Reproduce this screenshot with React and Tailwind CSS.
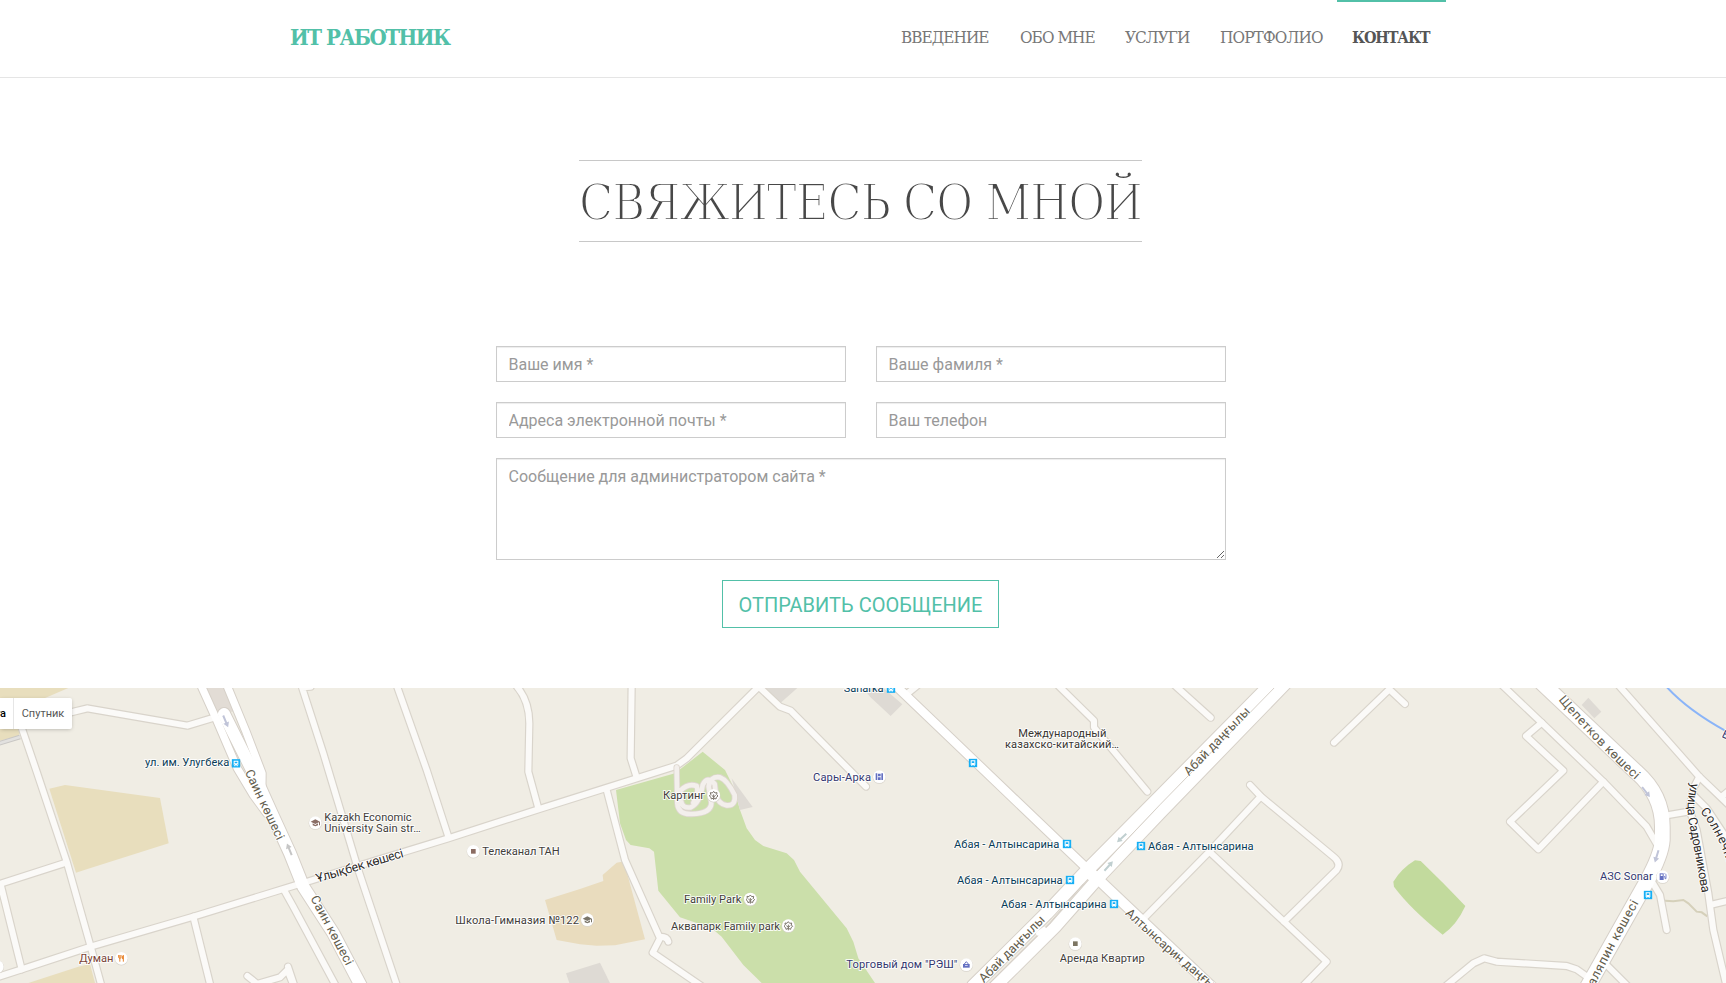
import React from 'react';

// Horizontal origins of the map tiles, in map units (3 units = 1px)
const A = 0, B = 870, C = 1740, D = 2610, E = 3480, F = 4290;

const areas = [
  [A, '#e8debd', 'M0,24 205,24 130,56 0,56Z'],
  [A, '#e8debd', 'M0,140 68,140 55,168 0,182Z'],
  [A, '#e8debd', 'M148,326 195,315 480,354 506,490 260,568 228,578Z'],
  [A, '#e8debd', 'M85,909 235,860 270,852 285,909Z'],
  [A, '#e2dcd5', 'M618,24 685,24 700,95 650,95Z'],
  [C, '#e9dcbe', 'M-105,660 -70,780 0,793 50,797 105,796 195,778 140,575 125,545 110,548 68,585 70,603 0,627Z'],
  [C, '#dedad4', 'M-42,880 60,848 90,909 -32,909Z'],
  [C, '#cbdfaa', 'M108,330 285,280 368,215 435,270 460,320 480,390 500,445 525,480 550,498 620,520 642,540 660,575 800,745 820,785 835,835 885,909 545,909 490,855 425,770 395,745 300,712 235,632 222,515 208,505 152,495 138,480 120,430Z'],
  [C, '#dedad4', 'M455,295 518,381 480,390Z'],
  [C, '#dedad4', 'M548,24 652,24 602,68Z'],
  [D, '#dedad4', 'M-20,24 40,24 97,73 62,108 0,50Z'],
  [E, '#c2da9d', 'M765,541 L782,543 L850,610 L916,678 Q890,735 848,764 Q750,685 702,620 L700,605 Q725,565 765,541Z'],
  [F, '#dedad4', 'M475,53 514,95 493,115 455,75Z'],
];

const local = [
  [A, 'M190,105 L217,96 L262,85 L562,137 L645,112'],
  [A, 'M64,140 L110,275 L200,545 L272,800 L305,920'],
  [A, 'M-10,615 L198,548'],
  [A, 'M3,618 L65,868'],
  [A, 'M-10,892 L65,868 L272,800 L580,710 L905,610'],
  [A, 'M580,710 L632,920'],
  [A, 'M852,630 L880,680 L1010,922'],
  [A, 'M742,888 L772,912 L840,892 L862,870 L882,920'],
  [B, 'M-6,860 L14,920'],
  [B, 'M20,615 L210,556 L475,475 L745,388 L945,325 L1160,257 L1190,235 L1402,24'],
  [B, 'M62,20 L36,22 L100,220 L205,570 L322,920'],
  [B, 'M318,10 L410,270 L475,470'],
  [B, 'M676,14 Q718,60 718,130 L715,275 L745,385'],
  [C, 'M155,14 L152,235 L170,292'],
  [C, 'M80,330 L135,540 L240,775 L218,818 L370,922'],
  [C, 'M240,770 Q262,770 265,785'],
  [C, 'M530,14 L600,80 L632,92 L858,320'],
  [D, 'M108,44 L145,14'],
  [D, 'M562,14 L672,122 L672,142 L832,335'],
  [D, 'M815,722 L1018,515 L1172,350'],
  [E, 'M42,14 L152,113'],
  [E, 'M735,72 L688,28 L522,188'],
  [E, 'M270,315 L303,350 L520,530 Q545,550 530,570 L372,725'],
  [E, 'M148,515 L372,725 L500,845 L425,922'],
  [F, 'M45,920 L130,850 L163,835 L200,845 L410,858 L440,868 L485,900'],
  [F, 'M215,14 L335,128 L520,305 L650,440 L685,500'],
  [F, 'M335,128 L288,168 L400,272 L240,425 L325,508 L520,305'],
  [F, 'M564,14 L808,290 L900,378'],
  [F, 'M875,350 L900,330'],
  [F, 'M808,290 L790,325 L778,390 L800,450 L835,640 L850,750 L890,920'],
  [F, 'M705,407 L775,395'],
  [F, 'M790,345 L830,385 L900,490'],
  [F, 'M845,674 L900,661'],
  [F, 'M660,595 L690,645 L710,750'],
  [F, 'M530,855 L595,920'],
];

const major = [
  [A, 22, 'M602,14 L650,120 L712,265 L760,345 L800,400'],
  [A, 22, 'M680,14 L738,155 L786,280 L785,350'],
  [A, 36, 'M672,102 L760,278 L815,400 L870,520 L910,620 L1000,760 L1092,935'],
  [D, 25, 'M74,14 L650,565'],
  [D, 30, 'M650,565 L1030,925'],
  [D, 38, 'M1206,10 L870,350 L652,570 L530,700 L310,918'],
  [D, 34, 'M1248,10 L870,400 L680,600 L555,742 L370,925'],
  [F, 44, 'M335,8 L620,277 Q697,345 697,440 L697,480 Q694,525 650,605 L470,925'],
];

const buses = [[A, 708, 250], [D, 63, 26], [D, 309, 249], [D, 591, 492], [D, 600, 600], [D, 732, 672], [D, 813, 498], [F, 654, 645]];

// origin, x start, x end, baseline, colour, text
const labels = [
  [A, 435, 688, 259, '#0a3c58', 'ул. им. Улугбека'],
  [A, 238, 340, 846, '#7b4438', 'Думан'],
  [B, 103, 365, 422, '#433e3b', 'Kazakh Economic'],
  [B, 103, 392, 455, '#433e3b', 'University Sain str…'],
  [B, 577, 809, 525, '#433e3b', 'Телеканал ТАН'],
  [B, 496, 867, 731, '#433e3b', 'Школа-Гимназия №122'],
  [C, 249, 375, 356, '#433e3b', 'Картинг'],
  [C, 312, 484, 668, '#433e3b', 'Family Park'],
  [C, 273, 600, 749, '#433e3b', 'Аквапарк Family park'],
  [C, 699, 873, 303, '#343870', 'Сары-Арка'],
  [C, 799, 1132, 863, '#343870', 'Торговый дом "РЭШ"'],
  [C, 791, 911, 36, '#0a3c58', 'Sanarka'],
  [D, 445, 709, 170, '#3a3633', 'Международный'],
  [D, 405, 747, 203, '#3a3633', 'казахско-китайский…'],
  [D, 252, 568, 504, '#0a3c58', 'Абая - Алтынсарина'],
  [D, 261, 578, 612, '#0a3c58', 'Абая - Алтынсарина'],
  [D, 393, 710, 684, '#0a3c58', 'Абая - Алтынсарина'],
  [D, 834, 1151, 510, '#0a3c58', 'Абая - Алтынсарина'],
  [D, 569, 824, 846, '#433e3b', 'Аренда Квартир'],
  [F, 510, 668, 599, '#343870', 'АЗС Sonar'],
];

const streets = [
  [A, 's1', 'M734,276 L836,492', '#625c4c', 'Саин көшесі', 228],
  [B, 's2', 'M61,655 L175,871', '#625c4c', 'Саин көшесі', 230],
  [B, 's3', 'M82,608 L358,526', '#2f2c29', 'Ұлықбек көшесі', 272],
  [D, 's4', 'M342,910 L542,706', '#625c4c', 'Абай даңғылы', 264],
  [E, 's5', 'M87,289 L287,81', '#625c4c', 'Абай даңғылы', 268],
  [D, 's6', 'M764,702 L883,811 L1078,973', '#625c4c', 'Алтынсарин даңғылы', 395],
  [F, 's7', 'M385,60 Q500,196 640,322', '#625c4c', 'Щепетков көшесі', 333],
  [F, 's8', 'M476,953 L554,800 L634,655', '#625c4c', 'Шаляпин көшесі', 322],
  [F, 's9', 'M783,308 Q766,370 777,430 Q796,520 824,690', '#2f2c29', 'улица\u00a0Садовникова', 336],
  [F, 's10', 'M810,396 Q850,440 880,515 L930,650', '#2f2c29', 'Солнечная', 205],
];

const arrows = [
  [A, 677, 124, 67, '#c0c4d8'],
  [A, 868, 508, -112, '#c6c6c6'],
  [D, 755, 474, 137, '#c0cfd0'],
  [D, 716, 558, -48, '#c0cfd0'],
  [F, 648, 336, 52, '#c0c4d8'],
  [F, 680, 529, 107, '#c0c4d8'],
];

const leaf = (
  <g fill="none" stroke="#7c766c" strokeWidth="3">
    <path d="M0,-12 L4,-7 L10,-8 L9,-2 L13,2 L8,6 L7,11 L0,8 L-7,11 L-8,6 L-13,2 L-9,-2 L-10,-8 L-4,-7Z" />
    <path d="M0,-3 V14 M-6,0 L0,5 L6,0" />
  </g>
);
const cap = (color) => (
  <g fill={color}>
    <path d="M-14,-3 L0,-10 L14,-3 L0,4Z" />
    <path d="M-8,2 L0,7 L8,2 V8 Q0,13 -8,8Z" />
    <path d="M11,-2 h3 v10 h-3z" />
  </g>
);
const pois = [
  [A, 364, 835, <g fill="none" stroke="#e8842c" strokeWidth="3"><path d="M-8,-10 V-3 Q-8,0 -4.500,0 Q-1,0 -1,-3 V-10 M-4.500,-10 V10" /><path d="M6,10 V-9 Q2,-6 3,1 H6" fill="#e8842c" /></g>],
  [A, -8, 860, null],
  [B, 76, 428, cap('#8a6e66')],
  [B, 550, 514, <rect x="-7" y="-7" width="14" height="14" fill="#8b6c62" />],
  [B, 892, 719, cap('#7a7569')],
  [C, 401, 346, leaf],
  [C, 511, 657, leaf],
  [C, 625, 737, leaf],
  [D, 28, 290, <g fill="#6470c2"><path d="M-11,-10 h5 v20 h-5z M6,-10 h5 v20 h-5z M-4,-9 h8 v8 h-8z M-4,2 h8 v8 h-8z" /></g>],
  [D, 289, 854, <g fill="#6470c2"><path d="M-10,-2 H10 V9 H-10Z" /><path d="M-6,-2 L0,-9 L6,-2" fill="none" stroke="#6470c2" strokeWidth="3" /><rect x="-4" y="2" width="8" height="2" fill="#fff" /></g>],
  [D, 616, 791, <rect x="-7" y="-7" width="14" height="14" fill="#7d7663" />],
  [F, 698, 590, <g fill="#6470c2"><path d="M-9,-10 H3 V10 H-9Z" /><path d="M4,0 H7 V6 H10 V-6 L6,-10" fill="none" stroke="#6470c2" strokeWidth="2.500" /><rect x="-6" y="-7" width="6" height="5" fill="#fff" /></g>],
];

function CityMap() {
  return (
    <svg className="block h-[295px] w-full font-[Roboto,sans-serif]" viewBox="0 24 5178 885" preserveAspectRatio="xMinYMin slice">
      <rect x="0" y="0" width="5178" height="930" fill="#f0ede4" />
      {areas.map(([o, c, d], i) => <path key={i} transform={`translate(${o} 0)`} d={d} fill={c} />)}
      <path d="M-5,191 L60,171" stroke="#c9c7c4" strokeWidth="14" />
      <path d="M-5,191 L60,171" stroke="#e2e1df" strokeWidth="8" />
      <g transform={`translate(${F} 0)`} fill="none">
        <path d="M704,14 Q770,90 900,160" stroke="#8ab4f8" strokeWidth="6" />
        <path d="M705,662 L730,664 L760,660 L775,670 L800,695 L815,697 L832,709" stroke="#d5d0ba" strokeWidth="6" />
      </g>
      <g fill="none" strokeLinecap="round" strokeLinejoin="round">
        <g stroke="#d9d4cb" strokeWidth="25">
          {local.map(([o, d], i) => <path key={i} transform={`translate(${o} 0)`} d={d} />)}
        </g>
        {major.map(([o, w, d], i) => <path key={i} transform={`translate(${o} 0)`} d={d} stroke="#d6d0c8" strokeWidth={w + 6} />)}
        <g stroke="#fbfaf8" strokeWidth="18">
          {local.map(([o, d], i) => <path key={i} transform={`translate(${o} 0)`} d={d} />)}
        </g>
        {major.map(([o, w, d], i) => <path key={i} transform={`translate(${o} 0)`} d={d} stroke="#fff" strokeWidth={w} />)}
        <g transform={`translate(${D} 0)`}>
          <path d="M1222,14 L870,374 L682,572" stroke="#d6d0c8" strokeWidth="3" />
          <path d="M640,612 L540,728 L352,916" stroke="#d6d0c8" strokeWidth="3" />
          <path d="M675,600 L645,572" stroke="#fff" strokeWidth="26" />
          <path d="M505,760 L522,748" stroke="#fff" strokeWidth="14" />
        </g>
        <g transform={`translate(${C} 0)`}>
          {[['#ddd6ce', 19], ['#f3efec', 14]].map(([c, w]) => (
            <path key={c} stroke={c} strokeWidth={w} d="M290,262 L292,370 Q295,404 335,402 Q394,400 394,368 L386,320 Q390,288 420,292 Q442,300 464,345 Q468,378 440,376 Q415,372 408,345 L404,312 Q382,286 368,315 Q360,370 332,382 Q306,386 303,362 L301,332 Q325,308 350,318 Q358,340 340,368" />
          ))}
        </g>
      </g>
      {arrows.map(([o, x, y, r, c], i) => (
        <path key={i} transform={`translate(${o + x} ${y}) rotate(${r})`} d="M-19,-3 H4 V-9 L19,0 L4,9 V3 H-19Z" fill={c} />
      ))}
      <g fontSize="38" stroke="#fff" strokeWidth="5" strokeLinejoin="round" paintOrder="stroke">
        {streets.map(([o, id, d, c, t, len]) => (
          <g key={id} transform={`translate(${o} 0)`}>
            <path id={id} d={d} fill="none" stroke="none" />
            <text fill={c} textLength={len}><textPath href={`#${id}`} textLength={len}>{t}</textPath></text>
          </g>
        ))}
      </g>
      <g fontSize="33.500" stroke="#fff" strokeOpacity="0.85" strokeWidth="6" strokeLinejoin="round" paintOrder="stroke">
        {labels.map(([o, x, x2, y, c, t], i) => (
          <text key={i} x={o + x} y={y} textLength={x2 - x} fill={c}>{t}</text>
        ))}
        <text x={F + 874} y="170" fill="#343870" transform={`rotate(25 ${F + 874} 170)`}>Б</text>
      </g>
      {buses.map(([o, x, y], i) => (
        <g key={i} transform={`translate(${o + x} ${y})`}>
          <rect x="-12.500" y="-12.500" width="25" height="25" fill="#16aff5" />
          <path d="M-7,-8 H7 V6 H5 V9 H2 V6 H-2 V9 H-5 V6 H-7Z" fill="#fff" />
          <path d="M-4,-5 H4 V0 H-4Z M-5,2 h2 v2 h-2z M3,2 h2 v2 h-2z" fill="#16aff5" />
        </g>
      ))}
      {pois.map(([o, x, y, icon], i) => (
        <g key={i} transform={`translate(${o + x} ${y})`}>
          <circle cy="1.500" r="20" fill="#d8d4cc" />
          <circle r="19" fill="#fff" />
          {icon}
        </g>
      ))}
    </svg>
  );
}

const field = 'block w-full border border-[#ccc] bg-white px-[11.500px] font-[Roboto,sans-serif] text-base text-[#555] shadow-[inset_0_1px_1px_rgba(0,0,0,0.075)] outline-none placeholder:text-[#999] placeholder:opacity-100';
const slab = "font-['Roboto_Slab','DejaVu_Serif_Condensed','DejaVu_Serif',serif]";

export default function App() {
  return (
    <div className="h-[983px] w-full overflow-hidden bg-white">
      <header className="h-[78px] border-b border-[#e5e5e5] pr-1">
        <div className={`mx-auto flex w-[1170px] justify-between pl-[14px] ${slab}`}>
          <a className="flex h-[75px] items-center text-[22px] font-bold tracking-[-1.450px] whitespace-nowrap text-[#52c0a8]">ИТ РАБОТНИК</a>
          <nav className="flex h-[75px] text-[17px] leading-[71px] tracking-[-0.950px] whitespace-nowrap text-[#777]">
            <a className="w-[118px] border-t-2 border-transparent px-[14px]">ВВЕДЕНИЕ</a>
            <a className="w-[105px] border-t-2 border-transparent px-[15px]">ОБО МНЕ</a>
            <a className="w-[95px] border-t-2 border-transparent px-[15px]">УСЛУГИ</a>
            <a className="w-[132px] border-t-2 border-transparent px-[15px] tracking-[-0.850px]">ПОРТФОЛИО</a>
            <a className="w-[109px] border-t-2 border-[#52c0a8] px-[15px] text-base font-bold leading-[71px] tracking-[-1.150px] text-[#555]">КОНТАКТ</a>
          </nav>
        </div>
      </header>
      <main className="flex h-[610px] flex-col items-center pt-[82px] pr-1">
        <h1 className={`mr-px flex h-[82px] w-[563px] justify-center border-y border-[#c8c8c8] text-[50px] leading-[84px] font-thin tracking-[-1.150px] whitespace-nowrap text-[#484848] [-webkit-text-stroke:1.800px_white] ${slab}`}>СВЯЖИТЕСЬ СО МНОЙ</h1>
        <form className="mt-[104px] flex w-[730px] flex-col items-center gap-5">
          <div className="grid w-full grid-cols-2 gap-x-[30px] gap-y-5">
            <input className={`${field} h-9`} placeholder="Ваше имя *" />
            <input className={`${field} h-9`} placeholder="Ваше фамиля *" />
            <input className={`${field} h-9`} placeholder="Адреса электронной почты *" />
            <input className={`${field} h-9`} placeholder="Ваш телефон" />
          </div>
          <textarea className={`${field} h-[102px] py-[6px] leading-[23px]`} placeholder="Сообщение для администратором сайта *" />
          <button type="button" className="mr-px h-12 w-[277px] border border-[#52c0a8] pt-[2px] font-[Roboto,sans-serif] text-xl whitespace-nowrap text-[#52c0a8]">ОТПРАВИТЬ СООБЩЕНИЕ</button>
        </form>
      </main>
      <section className="relative h-[295px] w-full overflow-hidden">
        <CityMap />
        <div className="absolute top-[10px] left-0 flex h-[31px] w-[72px] items-center rounded-r-xs bg-white font-[Roboto,sans-serif] text-[11px] shadow-[0_1px_4px_-1px_rgba(0,0,0,0.3)]">
          <div className="flex h-full w-[14px] shrink-0 items-center justify-end overflow-hidden border-r border-[#e6e6e6] pt-[2px] pr-[7px] font-medium text-black">Карта</div>
          <div className="grow pt-[2px] text-center text-[#565656]">Спутник</div>
        </div>
      </section>
    </div>
  );
}
